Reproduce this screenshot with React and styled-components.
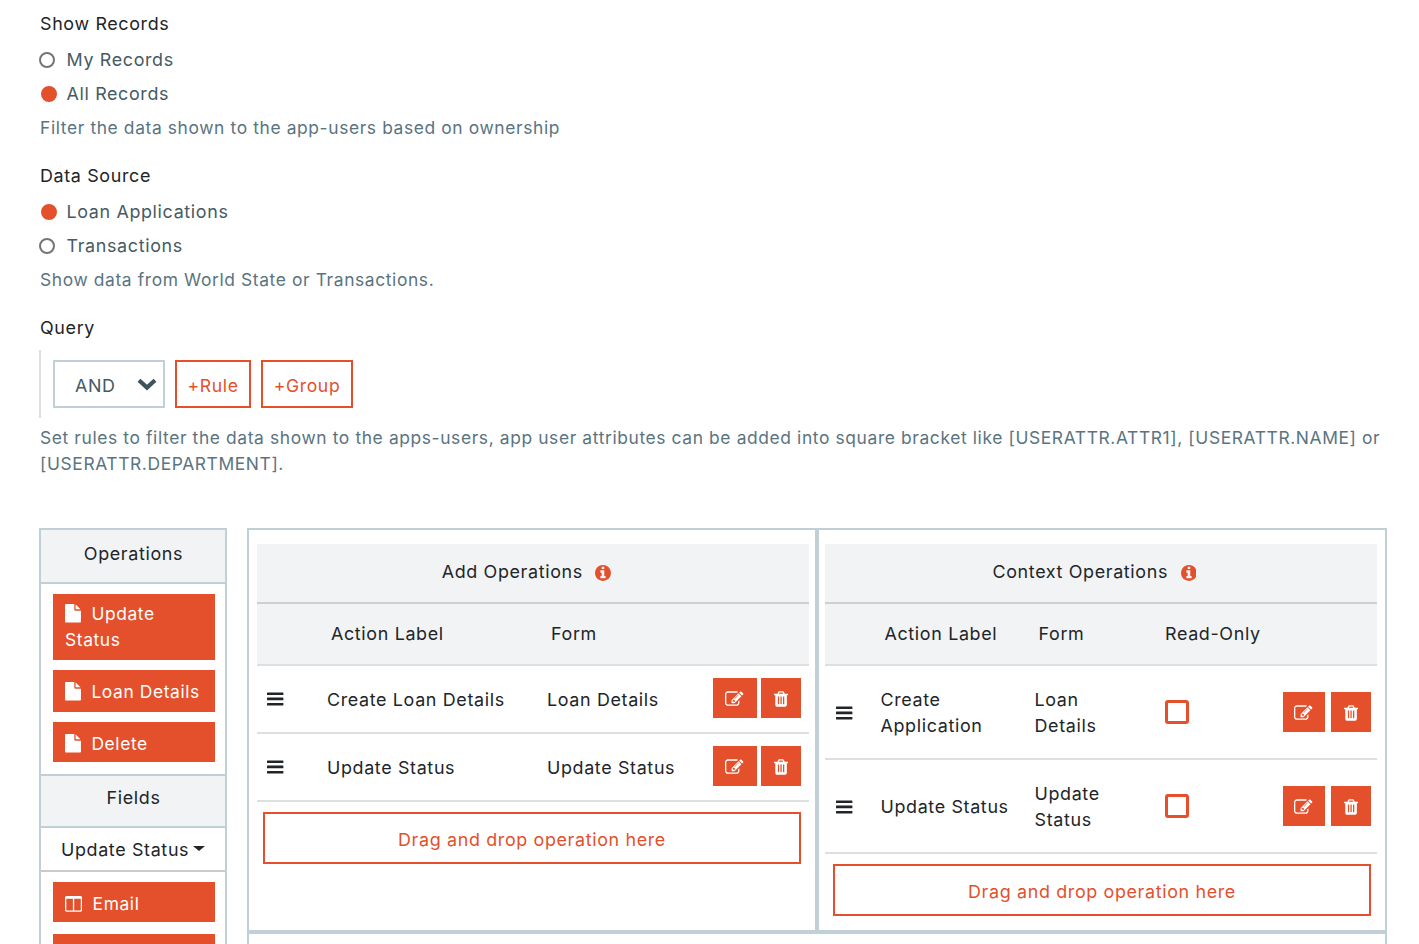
import React from "react";
import styled, { createGlobalStyle } from "styled-components";

const color = {
  accent: "#e4502b",
  frame: "#c1cfd7",
  head: "#f1f3f5",
  line: "#dedfe0",
  text: "#212529",
  label: "#455a64",
  help: "#5a7481",
};

const GlobalStyle = createGlobalStyle`
  *, *::before, *::after { box-sizing: border-box; }
  body {
    margin: 0;
    height: 944px;
    overflow: hidden;
    background: #fff;
    color: ${color.text};
    font: 400 17.9px/26px Inter, "Liberation Sans", sans-serif;
    letter-spacing: 0.65px;
  }
`;

const Page = styled.main`
  display: flex;
  flex-direction: column;
  width: 1387px;
  height: 944px;
  padding: 11px 0 0 39px;
  overflow: hidden;
`;

const FieldSet = styled.section`
  display: flex;
  flex-direction: column;
  gap: 8px;
  margin-bottom: 22px;
`;

const Legend = styled.div`
  padding-left: 1px;
  margin-bottom: ${(p) => (p.$tight ? 0 : 2)}px;
`;

const Help = styled.p`
  margin: 0;
  padding-left: 1px;
  color: ${color.help};
  font-size: 17.4px;
  letter-spacing: 0.62px;
`;

const RadioLabel = styled.label`
  display: flex;
  align-items: center;
  color: ${color.label};
`;

const RadioDot = styled.span`
  width: 16px;
  height: 16px;
  margin: 0 ${(p) => (p.$on ? "9.5px 0 2px" : "11.5px 0 0")};
  border-radius: 50%;
  border: 2px solid ${(p) => (p.$on ? color.accent : "#757575")};
  background: ${(p) => (p.$on ? color.accent : "#fff")};
`;

const RuleGroup = styled.div`
  display: flex;
  gap: 10px;
  height: 68px;
  padding: 10px 12px;
  border-left: 2px solid #dedede;
  margin: 1px 0 -1px;
`;

const Combinator = styled.div`
  display: flex;
  align-items: center;
  justify-content: space-between;
  width: 112px;
  height: 48px;
  padding: 3px 6px 0 20px;
  border: 2px solid ${color.frame};
  color: ${color.label};

  svg { margin-top: -3px; }
`;

const OutlineButton = styled.button`
  height: 48px;
  width: ${(p) => p.$width}px;
  padding: 3px 0 0;
  border: 2px solid ${color.accent};
  background: #fff;
  color: ${color.accent};
  font: inherit;
  font-size: 17.6px;
  letter-spacing: 0.65px;
`;

const Builder = styled.section`
  display: flex;
  align-items: stretch;
  gap: 20px;
  height: 600px;
  margin-top: 29px;
  flex: none;
`;

const Sidebar = styled.aside`
  width: 188px;
  border: 2px solid ${color.frame};
`;

const SideHead = styled.div`
  height: ${(p) => p.$height}px;
  padding-top: ${(p) => p.$top}px;
  padding-left: 1px;
  border-bottom: 2px solid ${color.frame};
  background: ${color.head};
  text-align: center;
`;

const SideList = styled.div`
  display: flex;
  flex-direction: column;
  gap: ${(p) => p.$gap}px;
  padding: 10px 10px 12px 12px;
  border-bottom: 2px solid ${color.frame};
`;

const Chip = styled.div`
  height: ${(p) => p.$height || 40}px;
  padding: ${(p) => p.$top ?? 9}px 12px 0;
  background: ${color.accent};
  color: #fff;
  font-size: 17.4px;
  letter-spacing: 0.6px;

  svg { vertical-align: ${(p) => (p.$column ? -2 : -3)}px; margin-right: 10.5px; }
`;

const Dropdown = styled.div`
  display: flex;
  align-items: center;
  gap: 4px;
  height: 44px;
  padding: 1px 0 0 20px;
  border-bottom: 2px solid #c9cacb;
`;

const Caret = styled.span`
  margin-top: -3px;
  border: 6px solid transparent;
  border-top: 5px solid ${color.text};
  border-bottom: 0;
`;

const Canvas = styled.div`
  width: 1140px;
  border: 2px solid ${color.frame};
`;

const Panels = styled.div`
  display: grid;
  grid-template-columns: 566px 1fr;
  column-gap: 4px;
  height: 404px;
  background: ${color.frame};
  border-bottom: 4px solid ${color.frame};
`;

const Panel = styled.div`
  padding: 14px ${(p) => (p.$right ? "8px 0 6px" : "6px 0 8px")};
  background: #fff;
`;

const PanelTitle = styled.div`
  display: flex;
  justify-content: center;
  height: 60px;
  padding: 15px 13px 0 0;
  border-bottom: 2px solid #cdcfd1;
  background: ${color.head};
`;

const InfoMark = styled.span`
  display: flex;
  margin: 6px 0 0 12.5px;
  height: 16px;
  color: ${color.accent};
`;

const Row = styled.div`
  display: grid;
  grid-template-columns: ${(p) => p.$columns};
  align-items: center;
  height: ${(p) => p.$height}px;
  border-bottom: 2px solid ${color.line};
  background: ${(p) => (p.$head ? color.head : "#fff")};
`;

const Cell = styled.div`
  padding: ${(p) => (p.$head ? "0 0 0 4px" : `1px ${p.$inset || 18}px 0 0`)};
`;

const Handle = styled.div`
  display: grid;
  padding: ${(p) => p.$top}px 0 0 ${(p) => p.$left}px;
`;

const Actions = styled.div`
  display: flex;
  gap: ${(p) => p.$gap}px;
  margin-top: ${(p) => p.$top}px;
`;

const IconButton = styled.button`
  display: flex;
  align-items: center;
  justify-content: center;
  width: ${(p) => p.$width || 40}px;
  height: 40px;
  padding: 2px ${(p) => (p.$width ? 1 : 0)}px 0 0;
  border: 0;
  background: ${color.accent};
  color: #fff;
`;

const Checkbox = styled.span`
  display: block;
  width: 24px;
  height: 24px;
  border: 3px solid ${color.accent};
  border-radius: 3px;
  background: #fff;
`;

const DropZone = styled.div`
  width: 538px;
  height: 52px;
  margin: 10px 0 0 ${(p) => p.$left}px;
  padding-top: 13px;
  border: 2px solid ${color.accent};
  color: ${color.accent};
  text-align: center;
`;

const paths = {
  edit: "M888 1184l116-116-152-152-116 116v56h96v96h56zm440-720q-16-16-33 1l-350 350q-17 17-1 33t33-1l350-350q17-17 1-33zm80 594v190q0 119-84.5 203.5t-203.5 84.5h-832q-119 0-203.5-84.5t-84.5-203.5v-832q0-119 84.5-203.5t203.5-84.5h832q63 0 117 25 15 7 18 23 3 17-9 29l-49 49q-14 14-32 8-23-6-45-6h-832q-66 0-113 47t-47 113v832q0 66 47 113t113 47h832q66 0 113-47t47-113v-126q0-13 9-22l64-64q15-15 35-7t20 29zm-96-738l288 288-672 672h-288v-288zm444 132l-92 92-288-288 92-92q28-28 68-28t68 28l152 152q28 28 28 68t-28 68z",
  trash: "M704 1376v-704q0-14-9-23t-23-9h-64q-14 0-23 9t-9 23v704q0 14 9 23t23 9h64q14 0 23-9t9-23zm256 0v-704q0-14-9-23t-23-9h-64q-14 0-23 9t-9 23v704q0 14 9 23t23 9h64q14 0 23-9t9-23zm256 0v-704q0-14-9-23t-23-9h-64q-14 0-23 9t-9 23v704q0 14 9 23t23 9h64q14 0 23-9t9-23zm-544-992h448l-48-117q-7-9-17-11h-317q-10 2-17 11zm928 32v64q0 14-9 23t-23 9h-96v948q0 83-47 143.5t-113 60.5h-832q-66 0-113-58.5t-47-141.5v-952h-96q-14 0-23-9t-9-23v-64q0-14 9-23t23-9h309l70-167q15-37 54-63t79-26h320q40 0 79 26t54 63l70 167h309q14 0 23 9t9 23z",
  info: "M1152 1376v-160q0-14-9-23t-23-9h-96v-512q0-14-9-23t-23-9h-320q-14 0-23 9t-9 23v160q0 14 9 23t23 9h96v320h-96q-14 0-23 9t-9 23v160q0 14 9 23t23 9h448q14 0 23-9t9-23zm-128-896v-160q0-14-9-23t-23-9h-192q-14 0-23 9t-9 23v160q0 14 9 23t23 9h192q14 0 23-9t9-23zm640 416q0 209-103 385.5t-279.5 279.5-385.5 103-385.5-103-279.5-279.5-103-385.5 103-385.5 279.5-279.5 385.5-103 385.5 103 279.5 279.5 103 385.5z",
  file: "M1152 512v-472q22 14 36 28l408 408q14 14 28 36h-472zm-128 32q0 40 28 68t68 28h544v1056q0 40-28 68t-68 28h-1344q-40 0-68-28t-28-68v-1600q0-40 28-68t68-28h800v544z",
  columns: "M224 1536h608v-1152h-640v1120q0 13 9.5 22.5t22.5 9.5zm1376-32v-1120h-640v1152h608q13 0 22.5-9.5t9.5-22.5zm128-1216v1216q0 66-47 113t-113 47h-1344q-66 0-113-47t-47-113v-1216q0-66 47-113t113-47h1344q66 0 113 47t47 113z",
};

const boxes = {
  edit: [0, 0, 1792, 1792],
  trash: [192, 0, 1408, 1792],
  info: [128, 128, 1536, 1536],
  file: [128, 0, 1536, 1792],
  columns: [64, 128, 1664, 1536],
};

const Icon = ({ name, size = 18 }) => {
  const [x, y, w, h] = boxes[name];
  return (
    <svg
      width={(w / 1792) * size}
      height={(h / 1792) * size}
      viewBox={`${x} ${y} ${w} ${h}`}
      fill="currentColor"
      aria-hidden="true"
    >
      <path d={paths[name]} />
    </svg>
  );
};

const Bars = () => (
  <svg width="17" height="14" viewBox="0 0 17 14" fill={color.text} aria-hidden="true">
    <rect x="0" y="0.4" width="16.4" height="2.6" rx="0.5" />
    <rect x="0" y="5.6" width="16.4" height="2.6" rx="0.5" />
    <rect x="0" y="10.9" width="16.4" height="2.6" rx="0.5" />
  </svg>
);

const Chevron = () => (
  <svg width="20" height="13" viewBox="0 0 20 13" fill="none" stroke="#3f535d" strokeWidth="4.2" aria-hidden="true">
    <path d="M2 2.2l8 7.4 8-7.4" />
  </svg>
);

const Radio = ({ on, children }) => (
  <RadioLabel>
    <RadioDot $on={on} />
    {children}
  </RadioLabel>
);

const RowActions = ({ width, gap, top }) => (
  <Actions $gap={gap} $top={top}>
    <IconButton $width={width} aria-label="Edit"><Icon name="edit" size={18.4} /></IconButton>
    <IconButton aria-label="Delete"><Icon name="trash" /></IconButton>
  </Actions>
);

const addColumns = "70px 220px 166px 1fr";
const contextColumns = "55.5px 154px 130.5px 118px 1fr";

export default function App() {
  return (
    <>
      <GlobalStyle />
      <Page>
        <FieldSet>
          <Legend>Show Records</Legend>
          <Radio>My Records</Radio>
          <Radio on>All Records</Radio>
          <Help>Filter the data shown to the app-users based on ownership</Help>
        </FieldSet>
        <FieldSet>
          <Legend>Data Source</Legend>
          <Radio on>Loan Applications</Radio>
          <Radio>Transactions</Radio>
          <Help>Show data from World State or Transactions.</Help>
        </FieldSet>
        <FieldSet>
          <Legend $tight>Query</Legend>
          <RuleGroup>
            <Combinator>
              AND
              <Chevron />
            </Combinator>
            <OutlineButton $width={76}>+Rule</OutlineButton>
            <OutlineButton $width={92}>+Group</OutlineButton>
          </RuleGroup>
          <Help>
            Set rules to filter the data shown to the apps-users, app user attributes can be added
            into square bracket like [USERATTR.ATTR1], [USERATTR.NAME] or [USERATTR.DEPARTMENT].
          </Help>
        </FieldSet>

        <Builder>
          <Sidebar>
            <SideHead $height={54} $top={11}>Operations</SideHead>
            <SideList $gap={10}>
              <Chip $height={66} $top={7}><Icon name="file" size={18.6} />Update Status</Chip>
              <Chip $height={42}><Icon name="file" size={18.6} />Loan Details</Chip>
              <Chip><Icon name="file" size={18.6} />Delete</Chip>
            </SideList>
            <SideHead $height={52} $top={9}>Fields</SideHead>
            <Dropdown>
              Update Status
              <Caret />
            </Dropdown>
            <SideList $gap={12}>
              <Chip $column><Icon name="columns" size={18.4} />Email</Chip>
              <Chip />
            </SideList>
          </Sidebar>

          <Canvas>
            <Panels>
              <Panel>
                <PanelTitle>
                  Add Operations
                  <InfoMark><Icon name="info" size={18.6} /></InfoMark>
                </PanelTitle>
                <Row $columns={addColumns} $height={62} $head>
                  <span />
                  <Cell $head>Action Label</Cell>
                  <Cell $head>Form</Cell>
                </Row>
                {[["Create Loan Details", "Loan Details"], ["Update Status", "Update Status"]].map(([label, form]) => (
                  <Row key={label} $columns={addColumns} $height={68}>
                    <Handle $left={9.5} $top={0}><Bars /></Handle>
                    <Cell>{label}</Cell>
                    <Cell>{form}</Cell>
                    <RowActions width={44} gap={4} top={-2} />
                  </Row>
                ))}
                <DropZone $left={6}>Drag and drop operation here</DropZone>
              </Panel>

              <Panel $right>
                <PanelTitle>
                  Context Operations
                  <InfoMark><Icon name="info" size={18.6} /></InfoMark>
                </PanelTitle>
                <Row $columns={contextColumns} $height={62} $head>
                  <span />
                  <Cell $head>Action Label</Cell>
                  <Cell $head>Form</Cell>
                  <span>Read-Only</span>
                </Row>
                {[["Create Application", "Loan Details"], ["Update Status", "Update Status"]].map(([label, form]) => (
                  <Row key={label} $columns={contextColumns} $height={94}>
                    <Handle $left={11} $top={1}><Bars /></Handle>
                    <Cell>{label}</Cell>
                    <Cell $inset={40}>{form}</Cell>
                    <Checkbox />
                    <RowActions width={42} gap={6} top={0} />
                  </Row>
                ))}
                <DropZone $left={8}>Drag and drop operation here</DropZone>
              </Panel>
            </Panels>
          </Canvas>
        </Builder>
      </Page>
    </>
  );
}
